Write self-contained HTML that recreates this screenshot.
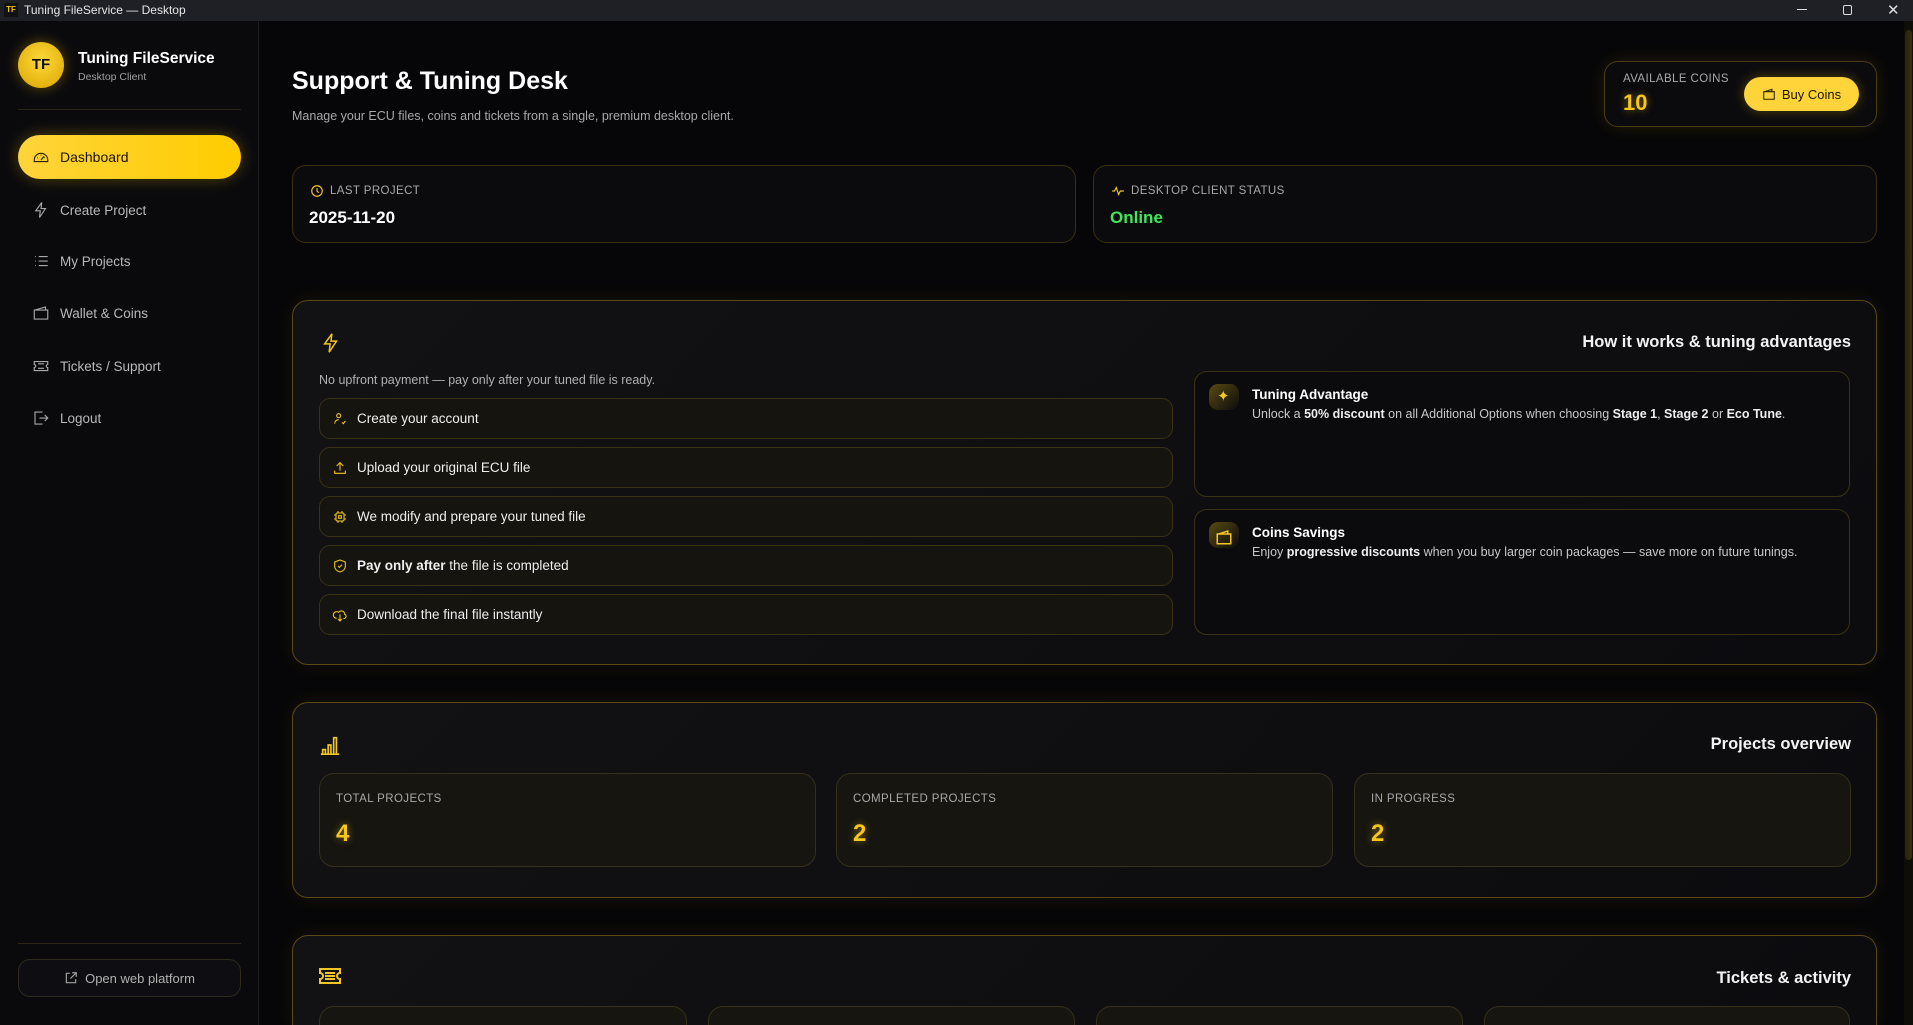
<!DOCTYPE html>
<html><head><meta charset="utf-8"><style>
*{box-sizing:border-box;margin:0;padding:0}
html,body{width:1913px;height:1025px;overflow:hidden}
body{background:#060608;font-family:"Liberation Sans",sans-serif;color:#e8e8e8;position:relative}
.a{position:absolute}
.tb{left:0;top:0;width:1913px;height:21px;background:#1f2026;font-size:12px;color:#e6e6e6}
.side{left:0;top:21px;width:259px;height:1004px;background:#0a0a0d;border-right:1px solid #1c1c1f}
.nav{left:32px;font-size:13.5px;color:#b8b8b8;display:flex;align-items:center;gap:10px;height:20px}
.nav svg{width:18px;height:18px;stroke:#a8a8a8;fill:none;stroke-width:1.5}
.card{border:1px solid #3a3012;border-radius:14px;background:#0b0b0e}
.panel{border:1px solid #5a4815;border-radius:16px;background:linear-gradient(135deg,#121214,#0c0c0f);box-shadow:0 0 22px rgba(255,200,0,.08)}
.lab{font-size:11.5px;color:#a8a8a8;letter-spacing:.4px}
.step{left:319px;width:854px;height:41px;border:1px solid #3a3214;border-radius:11px;background:#15140f;display:flex;align-items:center;padding-left:12px;gap:9px;font-size:13.5px;color:#eee}
.step svg{width:16px;height:16px;stroke:#f3c623;fill:none;stroke-width:1.6}
.adv{left:1194px;width:656px;height:126px;border:1px solid #3a3214;border-radius:13px;background:#0b0b0d}
.ic{left:14px;top:12px;width:30px;height:26px;border-radius:9px;background:linear-gradient(135deg,#5a4a12,#0b0b0d)}
.inner{border:1px solid #36301a;border-radius:15px;background:#16150f}
.big{color:#f6c51e;font-weight:bold;font-size:24px;text-shadow:0 0 8px rgba(246,197,30,.5)}
h3{font-size:16.5px;font-weight:bold;color:#f3f3f3}
</style></head><body>
<div class="a tb">
 <div class="a" style="left:4px;top:3px;width:14px;height:14px;background:#111;color:#f5c518;font-size:8px;font-weight:bold;line-height:14px;text-align:center">TF</div>
 <div class="a" style="left:24px;top:3px">Tuning FileService — Desktop</div>
 <div class="a" style="left:1797px;top:9px;width:10px;height:1px;background:#ddd"></div>
 <div class="a" style="left:1843px;top:5px;width:9px;height:10px;border:1px solid #ddd;border-radius:2px"></div>
 <div class="a" style="left:1887px;top:1px;font-size:15px;color:#ddd">✕</div>
</div>
<div class="a side">
 <div class="a" style="left:18px;top:21px;width:46px;height:46px;border-radius:50%;background:radial-gradient(circle at 50% 40%,#ffd93a,#d9a400);box-shadow:0 0 14px rgba(255,200,0,.35);color:#111;font-weight:bold;font-size:15px;text-align:center;line-height:46px">TF</div>
 <div class="a" style="left:78px;top:29px;font-size:15.5px;font-weight:bold;color:#fff">Tuning FileService</div>
 <div class="a" style="left:78px;top:50px;font-size:10.5px;color:#a0a0a0">Desktop Client</div>
 <div class="a" style="left:18px;top:88px;width:223px;height:1px;background:#2a2515"></div>
 <div class="a" style="left:18px;top:114px;width:223px;height:44px;border-radius:22px;background:linear-gradient(90deg,#ffd43a,#ffcc00);box-shadow:0 0 16px rgba(255,200,0,.3)"></div>
 <div class="a nav" style="top:126px;color:#1a1400;font-size:14px"><svg viewBox="0 0 24 24" style="stroke:#2a2000"><path d="M3 16a9 9 0 0 1 18 0v2H3z M12 16l4-5 M7 13h1 M12 9v1 M17 13h-1"/></svg>Dashboard</div>
 <div class="a nav" style="top:179px"><svg viewBox="0 0 24 24"><path d="M13 2L5 13h6l-1 9 8-12h-6z"/></svg>Create Project</div>
 <div class="a nav" style="top:230px"><svg viewBox="0 0 24 24"><path d="M9 6h12M9 12h12M9 18h12M4 6h1M4 12h1M4 18h1"/></svg>My Projects</div>
 <div class="a nav" style="top:282px"><svg viewBox="0 0 24 24"><path d="M3 8h18v12H3z M4 8l14-4v4"/></svg>Wallet &amp; Coins</div>
 <div class="a nav" style="top:335px"><svg viewBox="0 0 24 24"><path d="M3 6h18v4a2 2 0 0 0 0 4v4H3v-4a2 2 0 0 0 0-4z M8 9h8M8 15h8"/></svg>Tickets / Support</div>
 <div class="a nav" style="top:387px"><svg viewBox="0 0 24 24"><path d="M14 4H4v16h10 M10 12h11 M17 8l4 4-4 4"/></svg>Logout</div>
 <div class="a" style="left:18px;top:922px;width:223px;height:1px;background:#2a2515"></div>
 <div class="a" style="left:18px;top:938px;width:223px;height:38px;border:1px solid #2e2a1e;border-radius:12px;background:#0e0e12;font-size:13px;color:#b0b0b0;display:flex;align-items:center;justify-content:center;gap:7px"><svg width="14" height="14" viewBox="0 0 24 24" fill="none" stroke="#a0a0a0" stroke-width="2"><path d="M10 4H4v16h16v-6 M14 3h7v7 M21 3L11 13"/></svg>Open web platform</div>
</div>

<div class="a" style="left:292px;top:67px;font-size:25px;font-weight:bold;color:#fff">Support &amp; Tuning Desk</div>
<div class="a" style="left:292px;top:109px;font-size:12.5px;color:#a8a8a8">Manage your ECU files, coins and tickets from a single, premium desktop client.</div>

<div class="a card" style="left:1604px;top:61px;width:273px;height:66px;border-color:#4a3d14;box-shadow:0 0 18px rgba(255,200,0,.12)">
 <div class="a lab" style="left:18px;top:11px">AVAILABLE COINS</div>
 <div class="a big" style="left:18px;top:28px;font-size:22px">10</div>
 <div class="a" style="left:139px;top:15px;width:115px;height:34px;border-radius:17px;background:#ffd43a;color:#1a1400;font-size:13px;display:flex;align-items:center;justify-content:center;gap:6px;box-shadow:0 0 12px rgba(255,200,0,.3)"><svg width="14" height="14" viewBox="0 0 24 24" fill="none" stroke="#2a2000" stroke-width="1.8"><path d="M3 8h18v13H3z M5 8l12-4v4"/></svg>Buy Coins</div>
</div>

<div class="a card" style="left:292px;top:165px;width:784px;height:78px">
 <div class="a lab" style="left:17px;top:18px;display:flex;gap:6px;align-items:center"><svg width="14" height="14" viewBox="0 0 24 24" fill="none" stroke="#f3c623" stroke-width="2"><circle cx="12" cy="12" r="9"/><path d="M12 7v5l3 3"/></svg>LAST PROJECT</div>
 <div class="a" style="left:16px;top:42px;font-size:17px;font-weight:bold;color:#fff">2025-11-20</div>
</div>
<div class="a card" style="left:1093px;top:165px;width:784px;height:78px">
 <div class="a lab" style="left:17px;top:18px;display:flex;gap:6px;align-items:center"><svg width="14" height="14" viewBox="0 0 24 24" fill="none" stroke="#f3c623" stroke-width="2"><path d="M2 12h4l3-6 4 12 3-6h6"/></svg>DESKTOP CLIENT STATUS</div>
 <div class="a" style="left:16px;top:42px;font-size:17px;font-weight:bold;color:#3ee85a">Online</div>
</div>

<div class="a panel" style="left:292px;top:300px;width:1585px;height:365px"></div>
<svg class="a" style="left:320px;top:331px" width="22" height="24" viewBox="0 0 24 24" fill="none" stroke="#f3c623" stroke-width="1.6"><path d="M13 2L5 13h6l-1 9 8-12h-6z"/></svg>
<h3 class="a" style="right:62px;top:333px">How it works &amp; tuning advantages</h3>
<div class="a" style="left:319px;top:373px;font-size:12.5px;color:#b0b0b0">No upfront payment — pay only after your tuned file is ready.</div>
<div class="a step" style="top:398px"><svg viewBox="0 0 24 24"><circle cx="10" cy="7" r="3"/><path d="M4 19c0-4 3-6 6-6 M15 17l2 2 3-4"/></svg>Create your account</div>
<div class="a step" style="top:447px"><svg viewBox="0 0 24 24"><path d="M12 16V4 M7 9l5-5 5 5 M4 16v4h16v-4"/></svg>Upload your original ECU file</div>
<div class="a step" style="top:496px"><svg viewBox="0 0 24 24"><rect x="6" y="6" width="12" height="12" rx="2"/><rect x="10" y="10" width="4" height="4"/><path d="M9 3v3M15 3v3M9 18v3M15 18v3M3 9h3M3 15h3M18 9h3M18 15h3"/></svg>We modify and prepare your tuned file</div>
<div class="a step" style="top:545px"><svg viewBox="0 0 24 24"><path d="M12 3l8 3v6c0 5-4 8-8 9-4-1-8-4-8-9V6z M9 12l2 2 4-4"/></svg><span><b>Pay only after</b> the file is completed</span></div>
<div class="a step" style="top:594px"><svg viewBox="0 0 24 24"><path d="M7 17a5 5 0 1 1 3-9 5 5 0 0 1 9 3 3 3 0 0 1-2 6 M12 11v10 M9 18l3 3 3-3"/></svg>Download the final file instantly</div>

<div class="a adv" style="top:371px"><div class="a ic"><span style="position:absolute;left:8px;top:3px;color:#f3c623;font-size:15px">✦</span></div>
 <div class="a" style="left:57px;top:15px;font-size:13.5px;font-weight:bold;color:#fff">Tuning Advantage</div>
 <div class="a" style="left:57px;top:35px;font-size:12.5px;color:#c8c8c8">Unlock a <b style="color:#eee">50% discount</b> on all Additional Options when choosing <b style="color:#eee">Stage 1</b>, <b style="color:#eee">Stage 2</b> or <b style="color:#eee">Eco Tune</b>.</div></div>
<div class="a adv" style="top:509px"><div class="a ic"><svg style="position:absolute;left:6px;top:6px" width="18" height="18" viewBox="0 0 24 24" fill="none" stroke="#f3c623" stroke-width="2"><path d="M3 8h18v13H3z M5 8l12-4v4"/></svg></div>
 <div class="a" style="left:57px;top:15px;font-size:13.5px;font-weight:bold;color:#fff">Coins Savings</div>
 <div class="a" style="left:57px;top:35px;font-size:12.5px;color:#c8c8c8">Enjoy <b style="color:#eee">progressive discounts</b> when you buy larger coin packages — save more on future tunings.</div></div>

<div class="a panel" style="left:292px;top:702px;width:1585px;height:196px"></div>
<svg class="a" style="left:319px;top:734px" width="22" height="22" viewBox="0 0 24 24" fill="none" stroke="#f3c623" stroke-width="1.8"><path d="M2 22h20 M4 22v-5h3v5 M10 22v-10h3v10 M16 22V4h3v18"/></svg>
<h3 class="a" style="right:62px;top:735px">Projects overview</h3>
<div class="a inner" style="left:319px;top:773px;width:497px;height:94px"><div class="a lab" style="left:16px;top:19px">TOTAL PROJECTS</div><div class="a big" style="left:16px;top:46px">4</div></div>
<div class="a inner" style="left:836px;top:773px;width:497px;height:94px"><div class="a lab" style="left:16px;top:19px">COMPLETED PROJECTS</div><div class="a big" style="left:16px;top:46px">2</div></div>
<div class="a inner" style="left:1354px;top:773px;width:497px;height:94px"><div class="a lab" style="left:16px;top:19px">IN PROGRESS</div><div class="a big" style="left:16px;top:46px">2</div></div>

<div class="a panel" style="left:292px;top:935px;width:1585px;height:90px;border-bottom:none;border-radius:16px 16px 0 0"></div>
<svg class="a" style="left:318px;top:966px" width="24" height="20" viewBox="0 0 24 20" fill="none" stroke="#f3c623" stroke-width="2"><path d="M2 3h20v4a3 3 0 0 0 0 6v4H2v-4a3 3 0 0 0 0-6z M7 7h10M7 10h10M7 13h10"/></svg>
<h3 class="a" style="right:62px;top:969px">Tickets &amp; activity</h3>
<div class="a inner" style="left:319px;top:1006px;width:368px;height:19px;border-bottom:none;border-radius:15px 15px 0 0"></div>
<div class="a inner" style="left:708px;top:1006px;width:367px;height:19px;border-bottom:none;border-radius:15px 15px 0 0"></div>
<div class="a inner" style="left:1096px;top:1006px;width:367px;height:19px;border-bottom:none;border-radius:15px 15px 0 0"></div>
<div class="a inner" style="left:1484px;top:1006px;width:366px;height:19px;border-bottom:none;border-radius:15px 15px 0 0"></div>

<div class="a" style="left:1904px;top:21px;width:9px;height:1004px;background:#0e0d08"></div>
<div class="a" style="left:1905px;top:30px;width:7px;height:830px;border-radius:4px;background:linear-gradient(90deg,#2a220a,#3a2f0c)"></div>
</body></html>
